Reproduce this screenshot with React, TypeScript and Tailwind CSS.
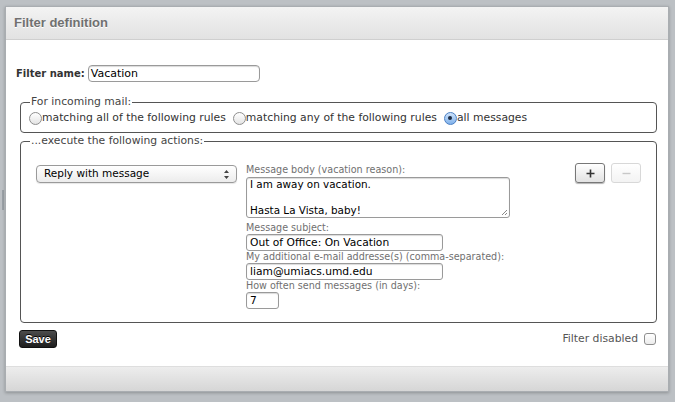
import React from 'react';

// ── Small form pieces ─────────────────────────────────────────────────────────

function Radio({ checked, label }: { checked?: boolean; label: string }) {
  return (
    <label className="flex items-center">
      <span
        className={
          'w-[13px] h-[13px] rounded-full border flex items-center justify-center shrink-0 ' +
          (checked
            ? 'border-[#4a7fc4] bg-gradient-to-b from-[#cfe3fb] to-[#7fb1ea]'
            : 'border-[#8e8e8e] bg-gradient-to-b from-[#ffffff] to-[#e4e4e4]')
        }>
        {checked && <span className="w-[4px] h-[4px] rounded-full bg-[#1c2c44]" />}
      </span>
      <span>{label}</span>
    </label>
  );
}

function Field({ label, value, w }: { label: string; value: string; w: string }) {
  return (
    <div className="flex flex-col">
      <span className="text-[#707070] text-[9.6px] leading-[12px]">{label}</span>
      <div className={`${w} h-[17px] border border-[#9a9a9a] rounded-[3px] px-[3px] leading-[15px] text-[10.7px] text-black bg-white shadow-[inset_0_1px_1px_rgba(0,0,0,0.15)]`}>
        {value}
      </div>
    </div>
  );
}

// ── Page ──────────────────────────────────────────────────────────────────────

export default function App() {
  return (
    <div
      className="w-[675px] h-[402px] bg-[#bcc0c4] relative overflow-hidden"
      style={{ fontFamily: '"DejaVu Sans", "Liberation Sans", sans-serif' }}>

      {/* splitter handle */}
      <div className="absolute left-[2px] top-[190px] w-[2px] h-[20px] bg-[#9aa0a6]" />

      <div className="absolute left-[5px] top-[6px] w-[664px] h-[386px] bg-white border border-[#a9adb1] shadow-[0_1px_3px_rgba(0,0,0,0.25)] flex flex-col">

        {/* ── Header ─────────────────────────────────────────────── */}
        <div className="h-[33px] shrink-0 bg-gradient-to-b from-[#f3f3f3] to-[#e2e2e2] border-b border-[#cfcfcf] flex items-center px-[8px]">
          <span
            className="text-[13px] font-bold text-[#707070] [text-shadow:0_1px_0_#fff]"
            style={{ fontFamily: '"Liberation Sans", Arial, sans-serif' }}>
            Filter definition
          </span>
        </div>

        {/* ── Body ───────────────────────────────────────────────── */}
        <div className="flex-1 text-[10.8px] text-[#333] pl-[14px] pr-[11px] pt-[24px]">
          <div className="flex items-center gap-[3px] -ml-[4px] h-[18px]">
            <span className="font-bold text-[10px] text-[#333]">Filter name:</span>
            <div className="w-[172px] h-[17px] border border-[#9a9a9a] rounded-[4px] px-[2px] leading-[15px] text-[11px] text-black shadow-[inset_0_1px_1px_rgba(0,0,0,0.15)]">
              Vacation
            </div>
          </div>

          <fieldset className="mt-[14px] border border-[#555] rounded-[4px] px-[9px] pt-[3px] pb-[7px]">
            <legend className="px-[1px] text-[#444] leading-[12px]">For incoming mail:</legend>
            <div className="flex items-center gap-[7px] -ml-[1px] h-[14px] text-[#333]">
              <Radio label="matching all of the following rules" />
              <Radio label="matching any of the following rules" />
              <Radio checked label="all messages" />
            </div>
          </fieldset>

          <fieldset className="mt-[2px] border border-[#555] rounded-[4px] pl-[15px] pr-[15px] h-[188px]">
            <legend className="px-[1px] -ml-[6px] text-[#444] leading-[12px]">...execute the following actions:</legend>
            <div className="flex items-start mt-[16px]">
              <div className="w-[201px] h-[18px] mt-[2px] border border-[#9a9a9a] rounded-[4px] bg-gradient-to-b from-[#ffffff] to-[#ececec] shadow-[0_1px_1px_rgba(0,0,0,0.1)] flex items-center justify-between pl-[7px] pr-[7px] text-[10.5px] text-black shrink-0">
                <span>Reply with message</span>
                <svg width="5" height="9" viewBox="0 0 5 9">
                  <path d="M2.5 0L5 3H0Z M2.5 9L5 6H0Z" fill="#444" />
                </svg>
              </div>

              <div className="ml-[9px] flex flex-col mt-[1px]">
                <div className="flex flex-col mb-[4px]">
                  <span className="text-[#707070] text-[9.6px] leading-[12px]">Message body (vacation reason):</span>
                  <div className="relative mt-[1px] w-[264px] h-[41px] border border-[#9a9a9a] rounded-[3px] px-[3px] leading-[13px] text-[10.4px] text-black shadow-[inset_0_1px_1px_rgba(0,0,0,0.15)]">
                    <div>I am away on vacation.</div>
                    <div>&nbsp;</div>
                    <div>Hasta La Vista, baby!</div>
                    <svg className="absolute right-[1px] bottom-[1px]" width="7" height="7" viewBox="0 0 7 7">
                      <path d="M6 1L1 6M6 4L4 6" stroke="#888" strokeWidth="1" />
                    </svg>
                  </div>
                </div>
                <Field label="Message subject:" value="Out of Office: On Vacation" w="w-[197px]" />
                <Field label="My additional e-mail addresse(s) (comma-separated):" value="liam@umiacs.umd.edu" w="w-[197px]" />
                <Field label="How often send messages (in days):" value="7" w="w-[33px]" />
              </div>

              <div className="ml-auto flex gap-[6px]">
                <div className="w-[30px] h-[20px] border border-[#777] rounded-[3px] bg-gradient-to-b from-[#ffffff] to-[#e2e2e2] shadow-[0_1px_1px_rgba(0,0,0,0.3)] flex items-center justify-center">
                  <svg width="9" height="9" viewBox="0 0 9 9">
                    <path d="M4.5 0.5V8.5M0.5 4.5H8.5" stroke="#333" strokeWidth="1.6" />
                  </svg>
                </div>
                <div className="w-[30px] h-[20px] border border-[#d8d8d8] rounded-[3px] bg-gradient-to-b from-[#ffffff] to-[#f3f3f3] flex items-center justify-center">
                  <svg width="9" height="9" viewBox="0 0 9 9">
                    <path d="M0.5 4.5H8.5" stroke="#c8c8c8" strokeWidth="1.4" />
                  </svg>
                </div>
              </div>
            </div>
          </fieldset>

          <div className="flex items-center justify-between mt-[7px]">
            <div
              className="-ml-[1px] w-[38px] h-[18px] rounded-[3px] bg-gradient-to-b from-[#4c4c4c] to-[#1e1e1e] border border-[#111] flex items-center justify-center text-white font-bold text-[11px] [text-shadow:0_-1px_0_#000]"
              style={{ fontFamily: '"Liberation Sans", Arial, sans-serif' }}>
              Save
            </div>
            <div className="flex items-center gap-[6px] text-[#555] pr-[1px]">
              <span>Filter disabled</span>
              <span className="w-[12px] h-[12px] border border-[#8e8e8e] rounded-[3px] bg-gradient-to-b from-white to-[#ececec]" />
            </div>
          </div>
        </div>

        {/* ── Footer ─────────────────────────────────────────────── */}
        <div className="h-[25px] shrink-0 bg-gradient-to-b from-[#ededed] to-[#d6d6d6] border-t border-[#dedede]" />
      </div>
    </div>
  );
}
